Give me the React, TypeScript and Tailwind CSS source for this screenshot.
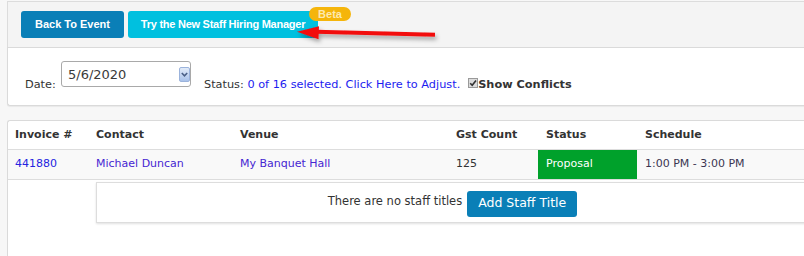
import React from "react";

const cols = "grid grid-cols-[80px_144px_216px_90px_99px_1fr]";

function ArrowOverlay() {
  return (
    <svg
      className="absolute left-[280px] top-[15px] pointer-events-none"
      width="175"
      height="40"
      viewBox="280 15 175 40"
    >
      <defs>
        <filter id="sh" x="-20%" y="-50%" width="140%" height="200%">
          <feDropShadow dx="1.5" dy="3" stdDeviation="2" floodColor="#000" floodOpacity="0.35" />
        </filter>
      </defs>
      <g filter="url(#sh)">
        <line x1="316" y1="31.8" x2="435" y2="34.8" stroke="#f20d0d" strokeWidth="4" />
        <polygon points="297,31.8 319,26.2 318.5,39.2" fill="#f20d0d" />
      </g>
    </svg>
  );
}

export default function App() {
  return (
    <div className="relative w-[804px] h-[256px] overflow-hidden bg-[#f7f7f7] text-[#333] font-['DejaVu_Sans',sans-serif] flex flex-col">
      {/* toolbar */}
      <div className="mt-px ml-[7px] mr-[-10px] h-[46px] bg-[#f4f4f4] border-t border-l border-[#dcdcdc] pl-[13px] pt-[9px] flex items-start gap-1">
        <button className="w-[103px] h-[27px] rounded-[3px] bg-[#0a7fb7] text-white text-[11px] font-bold font-['Liberation_Sans',Arial,sans-serif]">
          Back To Event
        </button>
        <div className="relative">
          <button className="w-[190px] h-[27px] rounded-[3px] bg-[#00c0df] text-white text-[11px] font-bold tracking-[-0.25px] font-['Liberation_Sans',Arial,sans-serif]">
            Try the New Staff Hiring Manager
          </button>
          <span className="absolute left-[181px] top-[-4px] w-[42px] h-[14px] rounded-full bg-[#f5b50b] text-[#fde9b0] text-[11px] font-bold leading-[14px] text-center font-['Liberation_Sans',Arial,sans-serif]">
            Beta
          </span>
        </div>
      </div>

      {/* filters */}
      <div className="ml-[7px] mr-[-10px] h-[59px] bg-white border-t border-l border-b border-[#dadada] rounded-bl-[3px] shadow-[0_1px_1px_rgba(0,0,0,0.06)] pt-[13px] pl-[17px] flex items-start text-[11.3px]">
        <span className="w-[36px] mt-[17px] leading-[13px]">Date:</span>
        <div className="w-[130px] h-[26px] border border-[#a9a9a9] rounded-[3px] flex items-center">
          <span className="pl-[6px] text-[13px] leading-[13px] text-[#3a3a3a] flex-1 mt-[1px]">5/6/2020</span>
          <span className="w-[11px] h-[15px] mr-0 rounded-[2px] border border-[#9bb3dc] bg-gradient-to-b from-[#e2ebf8] to-[#a9c2ea] flex items-center justify-center">
            <svg width="7" height="5" viewBox="0 0 7 5">
              <path d="M0.8 1 L3.5 3.8 L6.2 1" fill="none" stroke="#4a5f86" strokeWidth="1.6" />
            </svg>
          </span>
        </div>
        <span className="ml-[13px] mt-[17px] leading-[13px] whitespace-nowrap">
          Status: <span className="text-[#1c1cf0]">0 of 16 selected. Click Here to Adjust.</span>
        </span>
        <span className="ml-[8px] mt-[17px] w-[10px] h-[10px] border border-[#9a9a9a] bg-[#dcdcdc] flex items-center justify-center">
          <svg width="8" height="8" viewBox="0 0 8 8">
            <path d="M1.2 4.2 L3.2 6.2 L7 1.4" fill="none" stroke="#333" strokeWidth="1.6" />
          </svg>
        </span>
        <span className="mt-[17px] leading-[13px] font-bold whitespace-nowrap">Show Conflicts</span>
      </div>

      {/* table */}
      <div className="mt-[14px] ml-[7px] mr-[-10px] flex-1 bg-white border-t border-l border-[#dadada] rounded-tl-[3px] text-[11px]">
        <div className={`${cols} h-[29px] items-center font-bold border-b border-[#dddddd]`}>
          <span className="pl-[7px]">Invoice #</span>
          <span className="pl-[8px]">Contact</span>
          <span className="pl-[8px]">Venue</span>
          <span className="pl-[8px]">Gst Count</span>
          <span className="pl-[8px]">Status</span>
          <span className="pl-[8px]">Schedule</span>
        </div>
        <div className={`${cols} h-[30px] bg-[#f9f9f9] border-b border-[#dddddd]`}>
          <span className="pl-[7px] flex items-center text-[#2424e0]">441880</span>
          <span className="pl-[8px] flex items-center text-[#4626d2]">Michael Duncan</span>
          <span className="pl-[8px] flex items-center text-[#4626d2]">My Banquet Hall</span>
          <span className="pl-[8px] flex items-center">125</span>
          <span className="pl-[8px] flex items-center bg-[#00a12b] text-white">Proposal</span>
          <span className="pl-[8px] flex items-center text-[#3b3552]">1:00 PM - 3:00 PM</span>
        </div>
        <div className="pt-[2px] pl-[88px]">
          <div className="w-[713px] h-[41px] border border-[#dddddd] shadow-[0_1px_2px_rgba(0,0,0,0.12)] flex items-center justify-center">
            <span className="text-[11.5px] mb-[1px]">There are no staff titles</span>
            <button className="ml-[5px] mt-[2px] h-[26px] px-[11px] rounded-[3px] bg-[#0a7fb7] text-white text-[12.5px]">
              Add Staff Title
            </button>
          </div>
        </div>
      </div>

      <ArrowOverlay />
    </div>
  );
}
